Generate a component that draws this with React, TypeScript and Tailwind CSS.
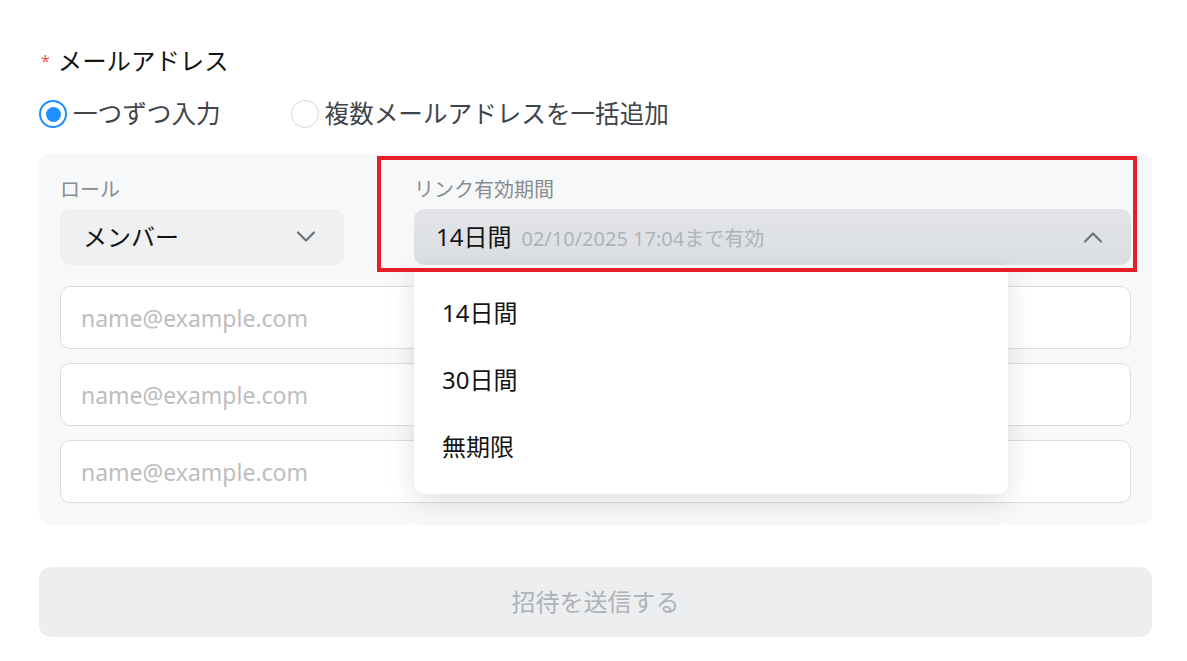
import { useState } from "react"

const font = "font-['Noto_Sans','Noto_Sans_CJK_JP',sans-serif]"

function Chevron({ up = false }: { up?: boolean }) {
  return (
    <svg width="20" height="12" viewBox="0 0 20 12" fill="none" className="shrink-0">
      <path
        d={up ? "M2 10.5 L10 2.5 L18 10.5" : "M2 1.5 L10 9.5 L18 1.5"}
        stroke="#6e7378"
        strokeWidth="2.2"
        strokeLinecap="round"
        strokeLinejoin="round"
      />
    </svg>
  )
}

function Radio({ checked, label }: { checked: boolean; label: string }) {
  return (
    <label className="flex items-center gap-[6px] cursor-pointer">
      {checked ? (
        <span className="w-[28px] h-[28px] rounded-full border-[2px] border-[#1f8fff] bg-white flex items-center justify-center">
          <span className="w-[15px] h-[15px] rounded-full bg-[#1f8fff]" />
        </span>
      ) : (
        <span className="w-[28px] h-[28px] rounded-full border border-[#d6d8da] bg-white" />
      )}
      <span className="text-[24.6px] text-[#3f444a] leading-none">{label}</span>
    </label>
  )
}

export default function App() {
  const [mode] = useState("single")
  const options = ["14日間", "30日間", "無期限"]

  return (
    <div className={`min-h-screen bg-white ${font}`}>
      <div className="w-[1113px] ml-[39px] pt-[43px]">
        {/* Label */}
        <div className="h-[36px] flex items-center">
          <span className="text-[#ea5a50] text-[16px] ml-[2px] mr-[8px]">*</span>
          <span className="text-[24.4px] text-[#141414]">メールアドレス</span>
        </div>

        {/* Radios */}
        <div className="mt-[17px] h-[36px] flex items-center gap-[70px]">
          <Radio checked={mode === "single"} label="一つずつ入力" />
          <Radio checked={mode === "bulk"} label="複数メールアドレスを一括追加" />
        </div>

        {/* Panel */}
        <div className="mt-[21px] rounded-[12px] bg-[#f7f8f9] px-[21px] pt-[25px] pb-[22px]">
          <div className="flex gap-[70px]">
            <div className="w-[284px]">
              <div className="h-[24px] flex items-center text-[20px] text-[#878c91]">ロール</div>
              <button className="mt-[7px] w-full h-[56px] rounded-[10px] bg-[#eef0f1] flex items-center justify-between pl-[23px] pr-[28px]">
                <span className="text-[24px] text-[#141414]">メンバー</span>
                <Chevron />
              </button>
            </div>

            <div className="flex-1 relative">
              <div className="h-[24px] flex items-center text-[20px] text-[#878c91]">リンク有効期間</div>
              <button className="mt-[7px] w-full h-[56px] rounded-[10px] bg-gradient-to-b from-[#e2e4e7] to-[#dcdfe2] flex items-center justify-between pl-[22px] pr-[28px]">
                <span className="flex items-baseline gap-[10px]">
                  <span className="text-[24px] text-[#141414]">14日間</span>
                  <span className="text-[20px] text-[#afb4b9]">02/10/2025 17:04まで有効</span>
                </span>
                <Chevron up />
              </button>

              {/* Highlight box */}
              <div className="absolute -left-[37px] -top-[22px] -right-[6px] -bottom-[7px] border-[4px] border-[#e61f28] pointer-events-none z-20" />

              {/* Dropdown */}
              <div className="absolute left-0 top-[87px] w-[594px] bg-white rounded-[10px] shadow-[0_8px_28px_rgba(0,0,0,0.12)] py-[14px] z-10">
                {options.map((o) => (
                  <div key={o} className="h-[67px] flex items-center px-[28px] text-[24px] text-[#141414]">
                    {o}
                  </div>
                ))}
              </div>
            </div>
          </div>

          <div className="mt-[21px] flex flex-col gap-[14px]">
            {[0, 1, 2].map((i) => (
              <input
                key={i}
                placeholder="name@example.com"
                className="h-[63px] w-full rounded-[10px] border border-[#d9dde0] bg-white px-[20px] text-[23px] placeholder:text-[#bdbdbd] outline-none"
              />
            ))}
          </div>
        </div>

        {/* Submit */}
        <button
          disabled
          className="mt-[42px] w-full h-[70px] rounded-[12px] bg-[#eceef0] text-[24px] text-[#aeb3b8]"
        >
          招待を送信する
        </button>
      </div>
    </div>
  )
}
